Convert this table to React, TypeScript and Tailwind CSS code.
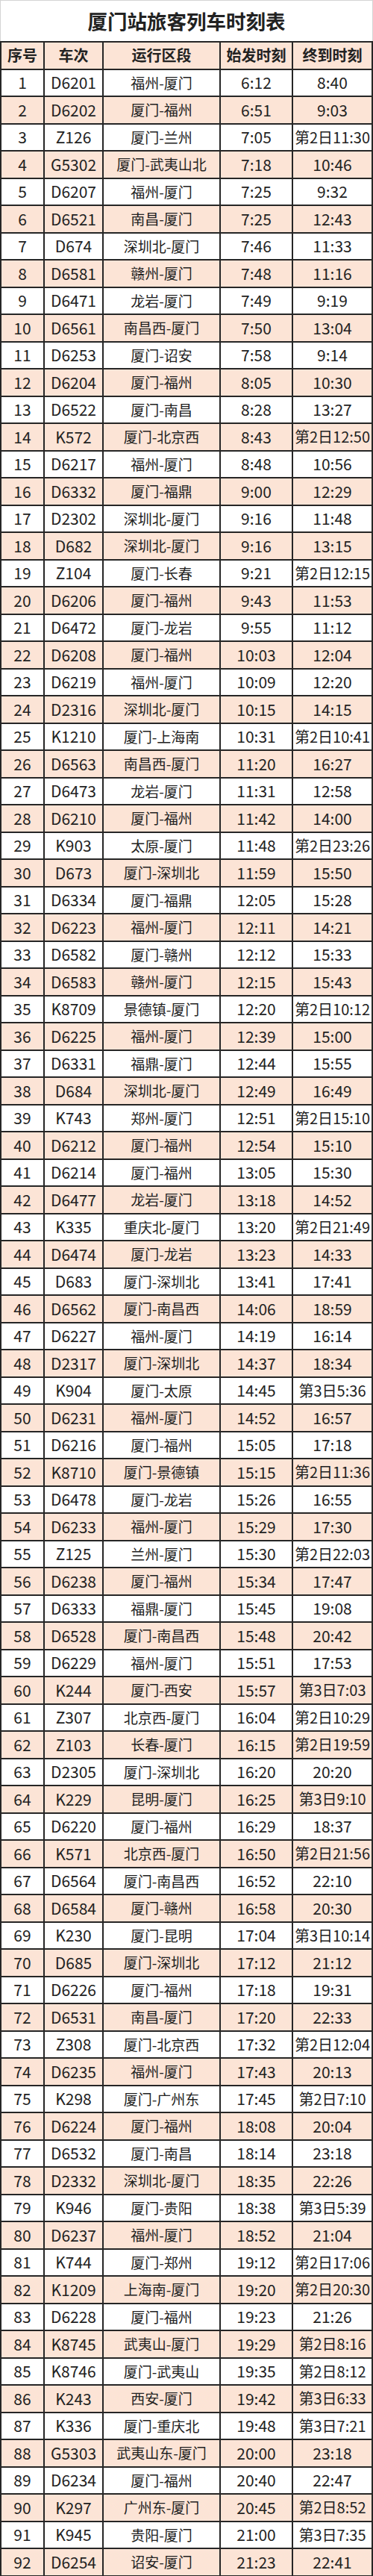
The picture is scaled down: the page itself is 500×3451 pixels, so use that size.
const trains: [string, string, string, string][] = [
  ["D6201", "福州-厦门", "6:12", "8:40"],
  ["D6202", "厦门-福州", "6:51", "9:03"],
  ["Z126", "厦门-兰州", "7:05", "第2日11:30"],
  ["G5302", "厦门-武夷山北", "7:18", "10:46"],
  ["D6207", "福州-厦门", "7:25", "9:32"],
  ["D6521", "南昌-厦门", "7:25", "12:43"],
  ["D674", "深圳北-厦门", "7:46", "11:33"],
  ["D6581", "赣州-厦门", "7:48", "11:16"],
  ["D6471", "龙岩-厦门", "7:49", "9:19"],
  ["D6561", "南昌西-厦门", "7:50", "13:04"],
  ["D6253", "厦门-诏安", "7:58", "9:14"],
  ["D6204", "厦门-福州", "8:05", "10:30"],
  ["D6522", "厦门-南昌", "8:28", "13:27"],
  ["K572", "厦门-北京西", "8:43", "第2日12:50"],
  ["D6217", "福州-厦门", "8:48", "10:56"],
  ["D6332", "厦门-福鼎", "9:00", "12:29"],
  ["D2302", "深圳北-厦门", "9:16", "11:48"],
  ["D682", "深圳北-厦门", "9:16", "13:15"],
  ["Z104", "厦门-长春", "9:21", "第2日12:15"],
  ["D6206", "厦门-福州", "9:43", "11:53"],
  ["D6472", "厦门-龙岩", "9:55", "11:12"],
  ["D6208", "厦门-福州", "10:03", "12:04"],
  ["D6219", "福州-厦门", "10:09", "12:20"],
  ["D2316", "深圳北-厦门", "10:15", "14:15"],
  ["K1210", "厦门-上海南", "10:31", "第2日10:41"],
  ["D6563", "南昌西-厦门", "11:20", "16:27"],
  ["D6473", "龙岩-厦门", "11:31", "12:58"],
  ["D6210", "厦门-福州", "11:42", "14:00"],
  ["K903", "太原-厦门", "11:48", "第2日23:26"],
  ["D673", "厦门-深圳北", "11:59", "15:50"],
  ["D6334", "厦门-福鼎", "12:05", "15:28"],
  ["D6223", "福州-厦门", "12:11", "14:21"],
  ["D6582", "厦门-赣州", "12:12", "15:33"],
  ["D6583", "赣州-厦门", "12:15", "15:43"],
  ["K8709", "景德镇-厦门", "12:20", "第2日10:12"],
  ["D6225", "福州-厦门", "12:39", "15:00"],
  ["D6331", "福鼎-厦门", "12:44", "15:55"],
  ["D684", "深圳北-厦门", "12:49", "16:49"],
  ["K743", "郑州-厦门", "12:51", "第2日15:10"],
  ["D6212", "厦门-福州", "12:54", "15:10"],
  ["D6214", "厦门-福州", "13:05", "15:30"],
  ["D6477", "龙岩-厦门", "13:18", "14:52"],
  ["K335", "重庆北-厦门", "13:20", "第2日21:49"],
  ["D6474", "厦门-龙岩", "13:23", "14:33"],
  ["D683", "厦门-深圳北", "13:41", "17:41"],
  ["D6562", "厦门-南昌西", "14:06", "18:59"],
  ["D6227", "福州-厦门", "14:19", "16:14"],
  ["D2317", "厦门-深圳北", "14:37", "18:34"],
  ["K904", "厦门-太原", "14:45", "第3日5:36"],
  ["D6231", "福州-厦门", "14:52", "16:57"],
  ["D6216", "厦门-福州", "15:05", "17:18"],
  ["K8710", "厦门-景德镇", "15:15", "第2日11:36"],
  ["D6478", "厦门-龙岩", "15:26", "16:55"],
  ["D6233", "福州-厦门", "15:29", "17:30"],
  ["Z125", "兰州-厦门", "15:30", "第2日22:03"],
  ["D6238", "厦门-福州", "15:34", "17:47"],
  ["D6333", "福鼎-厦门", "15:45", "19:08"],
  ["D6528", "厦门-南昌西", "15:48", "20:42"],
  ["D6229", "福州-厦门", "15:51", "17:53"],
  ["K244", "厦门-西安", "15:57", "第3日7:03"],
  ["Z307", "北京西-厦门", "16:04", "第2日10:29"],
  ["Z103", "长春-厦门", "16:15", "第2日19:59"],
  ["D2305", "厦门-深圳北", "16:20", "20:20"],
  ["K229", "昆明-厦门", "16:25", "第3日9:10"],
  ["D6220", "厦门-福州", "16:29", "18:37"],
  ["K571", "北京西-厦门", "16:50", "第2日21:56"],
  ["D6564", "厦门-南昌西", "16:52", "22:10"],
  ["D6584", "厦门-赣州", "16:58", "20:30"],
  ["K230", "厦门-昆明", "17:04", "第3日10:14"],
  ["D685", "厦门-深圳北", "17:12", "21:12"],
  ["D6226", "厦门-福州", "17:18", "19:31"],
  ["D6531", "南昌-厦门", "17:20", "22:33"],
  ["Z308", "厦门-北京西", "17:32", "第2日12:04"],
  ["D6235", "福州-厦门", "17:43", "20:13"],
  ["K298", "厦门-广州东", "17:45", "第2日7:10"],
  ["D6224", "厦门-福州", "18:08", "20:04"],
  ["D6532", "厦门-南昌", "18:14", "23:18"],
  ["D2332", "深圳北-厦门", "18:35", "22:26"],
  ["K946", "厦门-贵阳", "18:38", "第3日5:39"],
  ["D6237", "福州-厦门", "18:52", "21:04"],
  ["K744", "厦门-郑州", "19:12", "第2日17:06"],
  ["K1209", "上海南-厦门", "19:20", "第2日20:30"],
  ["D6228", "厦门-福州", "19:23", "21:26"],
  ["K8745", "武夷山-厦门", "19:29", "第2日8:16"],
  ["K8746", "厦门-武夷山", "19:35", "第2日8:12"],
  ["K243", "西安-厦门", "19:42", "第3日6:33"],
  ["K336", "厦门-重庆北", "19:48", "第3日7:21"],
  ["G5303", "武夷山东-厦门", "20:00", "23:18"],
  ["D6234", "厦门-福州", "20:40", "22:47"],
  ["K297", "广州东-厦门", "20:45", "第2日8:52"],
  ["K945", "贵阳-厦门", "21:00", "第3日7:35"],
  ["D6254", "诏安-厦门", "21:23", "22:41"],
];

const headers = ["序号", "车次", "运行区段", "始发时刻", "终到时刻"];

const rowGrid = "grid grid-cols-[58px_79px_157px_97px_1fr] h-[36.5px] border-b-2 border-[#262626]";
const cell = "flex items-center justify-center border-r-2 border-[#262626] whitespace-nowrap";

export default function App() {
  return (
    <div
      className="w-[500px] bg-white text-[#222]"
      style={{ fontFamily: '"Noto Sans CJK SC", "Noto Sans", sans-serif' }}
    >
      <div className="flex h-[55px] items-center justify-center border-x border-t border-[#d4d4d4]">
        <h1 className="text-[26.5px] font-bold">厦门站旅客列车时刻表</h1>
      </div>

      <div className="border-l-2 border-t-2 border-[#262626]">
        <div className={`${rowGrid} bg-[#fce4d6] text-[20px] font-bold`}>
          {headers.map((h) => (
            <div key={h} className={cell}>
              {h}
            </div>
          ))}
        </div>

        {trains.map(([code, route, depart, arrive], i) => (
          <div
            key={i}
            className={`${rowGrid} text-[21px] ${i % 2 === 1 ? "bg-[#fce4d6]" : "bg-white"}`}
          >
            <div className={cell}>{i + 1}</div>
            <div className={cell}>{code}</div>
            <div className={`${cell} text-[19px]`}>{route}</div>
            <div className={cell}>{depart}</div>
            <div className={`${cell} ${arrive.length > 5 ? "text-[20px]" : ""}`}>{arrive}</div>
          </div>
        ))}
      </div>
    </div>
  );
}
